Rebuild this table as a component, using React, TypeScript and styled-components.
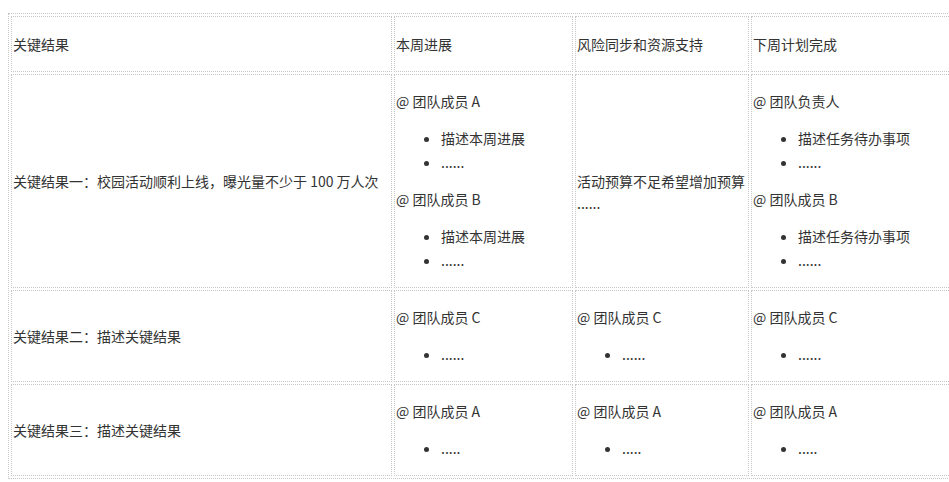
import React from "react";
import styled, { createGlobalStyle } from "styled-components";

type Member = {
  name: string;
  items: string[];
};

type Row = {
  title: string;
  progress: Member[];
  risk: Member[] | string[];
  next: Member[];
};

const rows: Row[] = [
  {
    title: "关键结果一：校园活动顺利上线，曝光量不少于 100 万人次",
    progress: [
      { name: "@ 团队成员 A", items: ["描述本周进展", "......"] },
      { name: "@ 团队成员 B", items: ["描述本周进展", "......"] },
    ],
    risk: ["活动预算不足希望增加预算", "......"],
    next: [
      { name: "@ 团队负责人", items: ["描述任务待办事项", "......"] },
      { name: "@ 团队成员 B", items: ["描述任务待办事项", "......"] },
    ],
  },
  {
    title: "关键结果二：描述关键结果",
    progress: [{ name: "@ 团队成员 C", items: ["......"] }],
    risk: [{ name: "@ 团队成员 C", items: ["......"] }],
    next: [{ name: "@ 团队成员 C", items: ["......"] }],
  },
  {
    title: "关键结果三：描述关键结果",
    progress: [{ name: "@ 团队成员 A", items: ["....."] }],
    risk: [{ name: "@ 团队成员 A", items: ["....."] }],
    next: [{ name: "@ 团队成员 A", items: ["....."] }],
  },
];

const headers = ["关键结果", "本周进展", "风险同步和资源支持", "下周计划完成"];
const colWidths = [381, 179, 174, 220];

const MemberBlock: React.FC<{ members: Member[] }> = ({ members }) => (
  <>
    {members.map((m, i) => (
      <React.Fragment key={i}>
        <Line>{m.name}</Line>
        <TaskList>
          {m.items.map((it, j) => (
            <TaskItem key={j}>{it}</TaskItem>
          ))}
        </TaskList>
      </React.Fragment>
    ))}
  </>
);

const isMembers = (v: Member[] | string[]): v is Member[] =>
  typeof v[0] !== "string";

const App: React.FC = () => {
  return (
    <>
      <GlobalStyle />
      <Page>
        <Table>
          <colgroup>
            {colWidths.map((w, i) => (
              <col key={i} style={{ width: w }} />
            ))}
          </colgroup>
          <tbody>
            <tr>
              {headers.map((h) => (
                <Cell key={h}>
                  <Line $head>{h}</Line>
                </Cell>
              ))}
            </tr>
            {rows.map((r) => (
              <tr key={r.title}>
                <Cell>
                  <Line>{r.title}</Line>
                </Cell>
                <Cell>
                  <MemberBlock members={r.progress} />
                </Cell>
                <Cell>
                  {isMembers(r.risk) ? (
                    <MemberBlock members={r.risk} />
                  ) : (
                    <RiskNote>
                      {r.risk[0]}
                      <br />
                      {r.risk[1]}
                    </RiskNote>
                  )}
                </Cell>
                <Cell>
                  <MemberBlock members={r.next} />
                </Cell>
              </tr>
            ))}
          </tbody>
        </Table>
      </Page>
    </>
  );
};

export default App;

const GlobalStyle = createGlobalStyle`
  html, body {
    margin: 0;
    padding: 0;
    background: #ffffff;
    overflow: hidden;
  }
  body {
    font-family: "Noto Sans CJK SC", "Noto Sans", sans-serif;
    font-size: 14px;
    color: #333333;
  }
`;

const Page = styled.div`
  padding: 13px 0 0 8px;
  width: 941px;
  height: 469px;
  overflow: hidden;
`;

const Table = styled.table`
  table-layout: fixed;
  border-collapse: separate;
  border-spacing: 2px;
  border: 1px dotted #c6c6c6;
  width: 966px;
`;

const Cell = styled.td`
  border: 1px dotted #c6c6c6;
  padding: 1px;
  vertical-align: middle;
  text-align: left;
  overflow: hidden;
`;

const Line = styled.p<{ $head?: boolean }>`
  margin: 14px 0;
  line-height: ${(p) => (p.$head ? "24px" : "22px")};
  white-space: nowrap;
`;

const RiskNote = styled.p`
  margin: 14px 0;
  padding-top: 22px;
  line-height: 22px;
  white-space: nowrap;
`;

const TaskList = styled.ul`
  margin: 14px 0;
  padding-left: 45px;
  list-style: disc;
`;

const TaskItem = styled.li`
  line-height: 24px;
  white-space: nowrap;
`;
